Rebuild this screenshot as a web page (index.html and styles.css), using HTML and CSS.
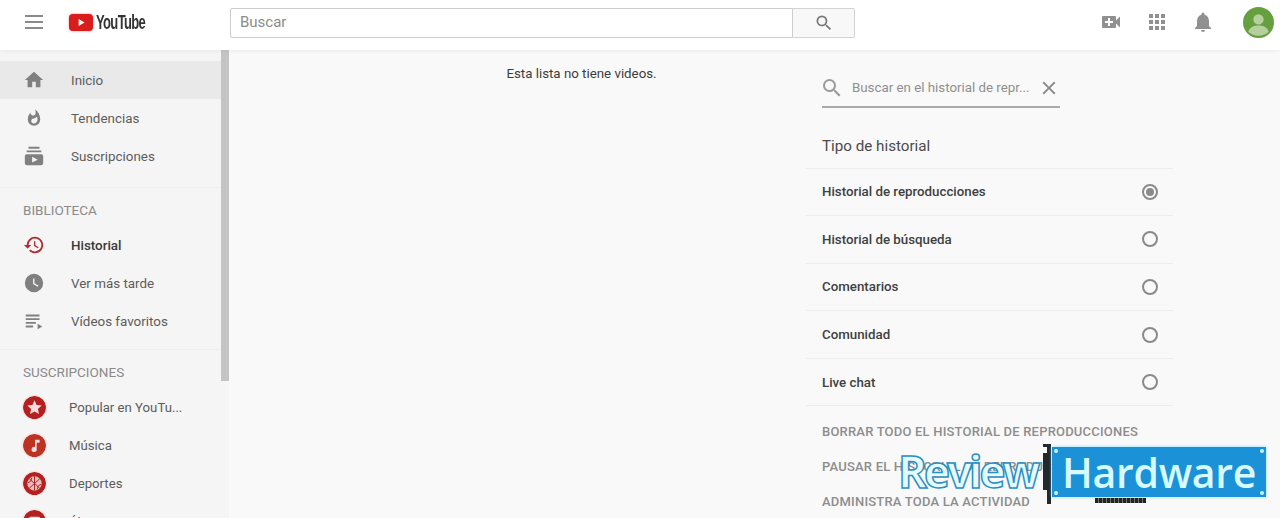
FILE: index.html
```html
<!DOCTYPE html>
<html lang="es">
<head>
<meta charset="utf-8">
<title>Historial - YouTube</title>
<link rel="stylesheet" href="styles.css">
</head>
<body>
<header class="top">
  <div class="top-left">
    <svg class="burger" viewBox="0 0 24 24"><path d="M3 5h18v2H3zM3 11h18v2H3zM3 17h18v2H3z"/></svg>
    <div class="logo">
      <svg class="logo-mark" viewBox="0 0 24 17"><rect width="24" height="17" rx="4" fill="#d91c1c"/><path d="M9.600 5v7l6-3.500z" fill="#fff"/></svg>
      <span class="logo-text">YouTube</span>
    </div>
  </div>
  <div class="search">
    <div class="search-input">Buscar</div>
    <div class="search-btn"><svg class="ic-search" viewBox="0 0 24 24"><path d="M15.500 14h-.79l-.28-.27A6.470 6.470 0 0 0 16 9.500 6.500 6.500 0 1 0 9.500 16c1.610 0 3.090-.59 4.230-1.570l.27.28v.79l5 4.990L20.490 19zm-6 0C7.010 14 5 11.990 5 9.500S7.010 5 9.500 5 14 7.010 14 9.500 11.990 14 9.500 14z"/></svg></div>
  </div>
  <div class="top-right">
    <svg class="top-ic" viewBox="0 0 24 24"><path d="M17 10.500V7a1 1 0 0 0-1-1H4a1 1 0 0 0-1 1v10a1 1 0 0 0 1 1h12a1 1 0 0 0 1-1v-3.500l4 4v-11zM14 13h-3v3H9v-3H6v-2h3V8h2v3h3z"/></svg>
    <svg class="top-ic" viewBox="0 0 24 24"><path d="M4 4h4v4H4zM10 4h4v4h-4zM16 4h4v4h-4zM4 10h4v4H4zM10 10h4v4h-4zM16 10h4v4h-4zM4 16h4v4H4zM10 16h4v4h-4zM16 16h4v4h-4z"/></svg>
    <svg class="top-ic" viewBox="0 0 24 24"><path d="M12 22a2 2 0 0 0 2-2h-4a2 2 0 0 0 2 2zm6-6v-5c0-3.070-1.640-5.640-4.500-6.320V4a1.500 1.500 0 0 0-3 0v.68C7.630 5.360 6 7.920 6 11v5l-2 2v1h16v-1z"/></svg>
    <svg class="avatar" viewBox="0 0 30 30"><circle cx="15" cy="15" r="15" fill="#659f3e"/><circle cx="15" cy="12" r="5" fill="#b5cf9f"/><path d="M5 24c2-5 6-6 10-6s8 1 10 6a15 15 0 0 1-20 0z" fill="#b5cf9f"/></svg>
  </div>
</header>

<div class="page">
  <nav class="side">
    <div class="side-scroll">
      <section class="group">
        <a class="item active"><svg class="ic" viewBox="0 0 24 24"><path d="M10 20v-6h4v6h5v-8h3L12 3 2 12h3v8z"/></svg><span>Inicio</span></a>
        <a class="item"><svg class="ic flame" viewBox="0 0 24 24"><path d="M13.500.7s.7 2.600.7 4.700c0 2-1.300 3.600-3.300 3.600S7.400 7.400 7.400 5.400l.03-.36A13.500 13.500 0 0 0 4 14a8 8 0 0 0 16 0c0-5.400-2.600-10.200-6.500-13.300zM11.700 19c-1.800 0-3.200-1.400-3.200-3.100 0-1.600 1-2.700 2.800-3.100 1.800-.36 3.600-1.200 4.600-2.600.4 1.300.6 2.700.6 4.100 0 2.600-2.100 4.700-4.800 4.700z"/></svg><span>Tendencias</span></a>
        <a class="item"><svg class="ic" viewBox="0 0 24 24"><path d="M20 8H4V6h16zM18 2H6v2h12zM22 12v8a2 2 0 0 1-2 2H4a2 2 0 0 1-2-2v-8a2 2 0 0 1 2-2h16a2 2 0 0 1 2 2zm-6 4-6-3.300v6.500z"/></svg><span>Suscripciones</span></a>
      </section>
      <section class="group library">
        <h3 class="group-title">BIBLIOTECA</h3>
        <a class="item current"><svg class="ic red" viewBox="0 0 24 24"><path d="M13 3a9 9 0 0 0-9 9H1l3.900 3.900.07.14L9 12H6a7 7 0 1 1 2.050 4.950l-1.420 1.420A9 9 0 1 0 13 3zm-1 5v5l4.280 2.540.72-1.210-3.500-2.080V8z"/></svg><span>Historial</span></a>
        <a class="item"><svg class="ic" viewBox="0 0 24 24"><path d="M12 2a10 10 0 1 0 0 20 10 10 0 0 0 0-20zm4.200 14.200L11 13V7h1.500v5.200l4.500 2.700z"/></svg><span>Ver más tarde</span></a>
        <a class="item"><svg class="ic" viewBox="0 0 24 24"><path d="M3 5h15v2H3zM3 9h15v2H3zM3 13h11v2H3zM3 17h8v2H3zM16 15v6l5-3z"/></svg><span>Vídeos favoritos</span></a>
      </section>
      <section class="group last">
        <h3 class="group-title">SUSCRIPCIONES</h3>
        <a class="item sub"><svg class="sub-ic" viewBox="0 0 24 24"><circle cx="12" cy="12" r="12" fill="#b3201f"/><path d="M12 4.500l2.200 5 5.300.5-4 3.600 1.200 5.300-4.700-2.800-4.700 2.800 1.200-5.300-4-3.600 5.300-.5z" fill="#f6dcdc"/></svg><span>Popular en YouTu...</span></a>
        <a class="item sub"><svg class="sub-ic" viewBox="0 0 24 24"><circle cx="12" cy="12" r="12" fill="#bc3223"/><path d="M12.500 6v7.600a2.700 2.700 0 1 0 1.800 2.400V9h3V6z" fill="#f6dcdc"/></svg><span>Música</span></a>
        <a class="item sub"><svg class="sub-ic" viewBox="0 0 24 24"><circle cx="12" cy="12" r="12" fill="#b3201f"/><circle cx="12" cy="12" r="7.500" fill="#e9bcbc"/><path d="M6.500 7 17.500 17M17.500 7 6.500 17M12 4.500v15M5 11c3 0 4-3 4-5M19 13c-3 0-4 3-4 5" stroke="#b3201f" fill="none"/></svg><span>Deportes</span></a>
        <a class="item sub low"><svg class="sub-ic" viewBox="0 0 24 24"><circle cx="12" cy="12" r="12" fill="#b3201f"/><rect x="6" y="7" width="12" height="8" rx="2" fill="#f6dcdc"/></svg><span>Últimas noticias</span></a>
      </section>
    </div>
    <div class="scrollbar"><div class="thumb"></div></div>
  </nav>

  <main class="main">
    <div class="results"><p class="empty">Esta lista no tiene videos.</p></div>
    <aside class="panel">
      <div class="filter">
        <svg class="filter-search" viewBox="0 0 24 24"><path d="M15.500 14h-.79l-.28-.27A6.470 6.470 0 0 0 16 9.500 6.500 6.500 0 1 0 9.500 16c1.610 0 3.090-.59 4.230-1.570l.27.28v.79l5 4.990L20.490 19zm-6 0C7.010 14 5 11.990 5 9.500S7.010 5 9.500 5 14 7.010 14 9.500 11.990 14 9.500 14z"/></svg>
        <span class="filter-text">Buscar en el historial de repr...</span>
        <svg class="filter-close" viewBox="0 0 24 24"><path d="M19 6.410 17.590 5 12 10.590 6.410 5 5 6.410 10.590 12 5 17.590 6.410 19 12 13.410 17.590 19 19 17.590 13.410 12z"/></svg>
      </div>
      <h2 class="panel-title">Tipo de historial</h2>
      <ul class="types">
        <li class="type"><span>Historial de reproducciones</span><i class="radio on"></i></li>
        <li class="type"><span>Historial de búsqueda</span><i class="radio"></i></li>
        <li class="type"><span>Comentarios</span><i class="radio"></i></li>
        <li class="type"><span>Comunidad</span><i class="radio"></i></li>
        <li class="type"><span>Live chat</span><i class="radio"></i></li>
      </ul>
      <div class="actions">
        <a class="action">BORRAR TODO EL HISTORIAL DE REPRODUCCIONES</a>
        <a class="action">PAUSAR EL HISTORIAL DE REPRODUCCIONES</a>
        <a class="action">ADMINISTRA TODA LA ACTIVIDAD</a>
      </div>
    </aside>
  </main>
</div>

<div class="mark">
  <span class="mark-review">Review</span>
  <div class="mark-card">
    <svg class="bracket" viewBox="0 0 8 60"><path d="M0 0h8v60H4V46H0V9h4V3H0z" fill="#22282b"/></svg>
    <div class="plate"><i class="dot tl"></i><i class="dot tr"></i><i class="dot bl"></i><i class="dot br"></i><span>Hardware</span></div>
    <div class="pins"></div>
  </div>
</div>
</body>
</html>
```

FILE: styles.css
```css
* { box-sizing: border-box; }
html, body { margin: 0; height: 518px; overflow: hidden; }
body { font-family: Roboto, "Liberation Sans", sans-serif; background: #f9f9f9; color: #111; position: relative; }

.top { height: 50px; background: #fff; display: flex; align-items: center; padding-bottom: 6px; box-shadow: 0 1px 4px rgba(0,0,0,.06); position: relative; z-index: 2; }
.top-left { width: 230px; display: flex; align-items: center; padding-left: 22px; flex: none; }
.burger { width: 24px; height: 24px; fill: #8a8a8a; flex: none; }
.logo { display: flex; align-items: center; margin-left: 23px; }
.logo-mark { width: 24px; height: 17px; filter: drop-shadow(0 0 1px rgba(224,27,27,.5)); flex: none; }
.logo-text { font-family: "Liberation Sans", sans-serif; font-weight: 700; font-size: 20px; letter-spacing: -1px; color: #333; margin-left: 3px; transform: scaleX(.65); transform-origin: left center; display: block; }
.search { width: 625px; height: 30px; display: flex; flex: none; margin-top: 2px; }
.search-input { flex: 1; border: 1px solid #ccc; border-radius: 2px 0 0 2px; font-size: 15px; color: #8b8b8b; padding: 0 9px; line-height: 26px; background: #fff; }
.search-btn { width: 62px; border: 1px solid #d3d3d3; border-left: 0; background: #f8f8f8; display: flex; align-items: center; justify-content: center; border-radius: 0 2px 2px 0; }
.ic-search { width: 20px; height: 20px; fill: #777; }
.top-right { margin-left: auto; display: flex; align-items: center; padding-right: 6px; }
.top-ic { width: 24px; height: 24px; fill: #909090; margin-right: 22px; }
.avatar { width: 31px; height: 31px; margin-left: 6px; }

.page { display: flex; height: 468px; }
.side { width: 229px; flex: none; background: #f5f5f5; display: flex; overflow: hidden; }
.side-scroll { width: 221px; flex: none; padding-top: 11px; }
.scrollbar { width: 8px; flex: none; }
.thumb { height: 331px; background: #c4c4c4; }
.group { border-bottom: 1px solid #eee; padding-bottom: 12px; margin-bottom: 11px; }
.group.library { padding-bottom: 9px; }
.group.last { border: 0; }
.group-title { margin: 0; font-size: 13.500px; font-weight: 400; color: #8a8a8a; height: 27px; line-height: 23px; padding-left: 23px; }
.item { height: 38px; display: flex; align-items: center; padding-left: 23px; font-size: 13.400px; color: #5c5c5c; white-space: nowrap; }
.item.active { background: #e9e9e9; }
.item.current { color: #3a3a3a; font-weight: 500; }
.ic { width: 22px; height: 22px; fill: #808080; margin-right: 26px; flex: none; }
.ic.red { fill: #b52a2e; }
.ic.flame { transform: scale(.85); }
.sub { font-size: 13.200px; }
.sub.low { align-items: flex-start; }
.sub.low span { margin-top: 13px; }
.sub.low .sub-ic { margin-top: 8px; }
.sub-ic { width: 23px; height: 23px; margin-right: 23px; flex: none; box-shadow: 0 0 2px rgba(200,30,30,.3); border-radius: 50%; }

.main { flex: 1; display: flex; }
.results { width: 577px; flex: none; display: flex; justify-content: center; padding: 15px 0 0 128px; }
.empty { margin: 0; font-size: 13.300px; line-height: 18px; color: #3c3c3c; }
.panel { width: 367px; flex: none; }
.filter { margin: 20px 0 0 16px; width: 238px; height: 38px; border-bottom: 2px solid #aaa; display: flex; align-items: center; }
.filter-search { width: 24px; height: 24px; fill: #9a9a9a; margin-left: -2px; flex: none; }
.filter-text { font-size: 13.300px; color: #8f8f8f; margin: 0 0 2px 8px; white-space: nowrap; flex: 1; }
.filter-close { width: 22px; height: 22px; fill: #8a8a8a; flex: none; margin-left: -1px; }
.panel-title { margin: 0; font-size: 15.200px; font-weight: 400; color: #4a4a4a; padding-left: 16px; height: 60.500px; line-height: 77px; border-bottom: 1px solid #eee; }
.types { list-style: none; margin: 0; padding: 0; }
.type { height: 47.600px; border-bottom: 1px solid #eee; display: flex; align-items: center; justify-content: space-between; padding: 0 15px 0 16px; font-size: 13.300px; font-weight: 500; color: #404040; }
.radio { width: 16px; height: 16px; border: 2px solid #8a8a8a; border-radius: 50%; display: block; position: relative; }
.radio.on::after { content: ""; position: absolute; inset: 2px; border-radius: 50%; background: #8a8a8a; }
.actions { padding: 8px 0 0 16px; display: flex; flex-direction: column; }
.action { height: 35px; line-height: 35px; font-size: 13px; font-weight: 500; color: #8d8d8d; letter-spacing: .2px; white-space: nowrap; }

.mark { position: absolute; left: 897px; top: 444px; width: 372px; height: 62px; z-index: 5; }
.mark-review { position: absolute; left: 1px; top: -4px; font-family: "Open Sans", sans-serif; font-weight: 700; font-size: 44px; line-height: 62px; letter-spacing: -3px; color: #e6fbff; -webkit-text-stroke: 1.500px #2a8fc4; }
.mark-card { position: absolute; left: 146px; top: 0; width: 226px; height: 62px; }
.bracket { position: absolute; left: 0; top: 0; width: 8px; height: 60px; }
.plate { position: absolute; left: 9px; top: 3px; width: 214px; height: 50px; background: #1b91d8; box-shadow: 0 0 3px #7fdcff; display: flex; align-items: center; justify-content: center; }
.plate span { font-family: "Open Sans", sans-serif; font-size: 41px; font-weight: 600; color: #d6fbff; line-height: 50px; letter-spacing: -.3px; }
.dot { position: absolute; width: 4px; height: 4px; border-radius: 50%; background: #c9f4ff; }
.dot.tl { left: 2px; top: 2px; }
.dot.tr { right: 2px; top: 2px; }
.dot.bl { left: 2px; bottom: 2px; }
.dot.br { right: 2px; bottom: 2px; }
.pins { position: absolute; left: 52px; top: 54px; width: 51px; height: 5px; background: repeating-linear-gradient(90deg, #222 0 3px, #777 3px 4px); }
```
